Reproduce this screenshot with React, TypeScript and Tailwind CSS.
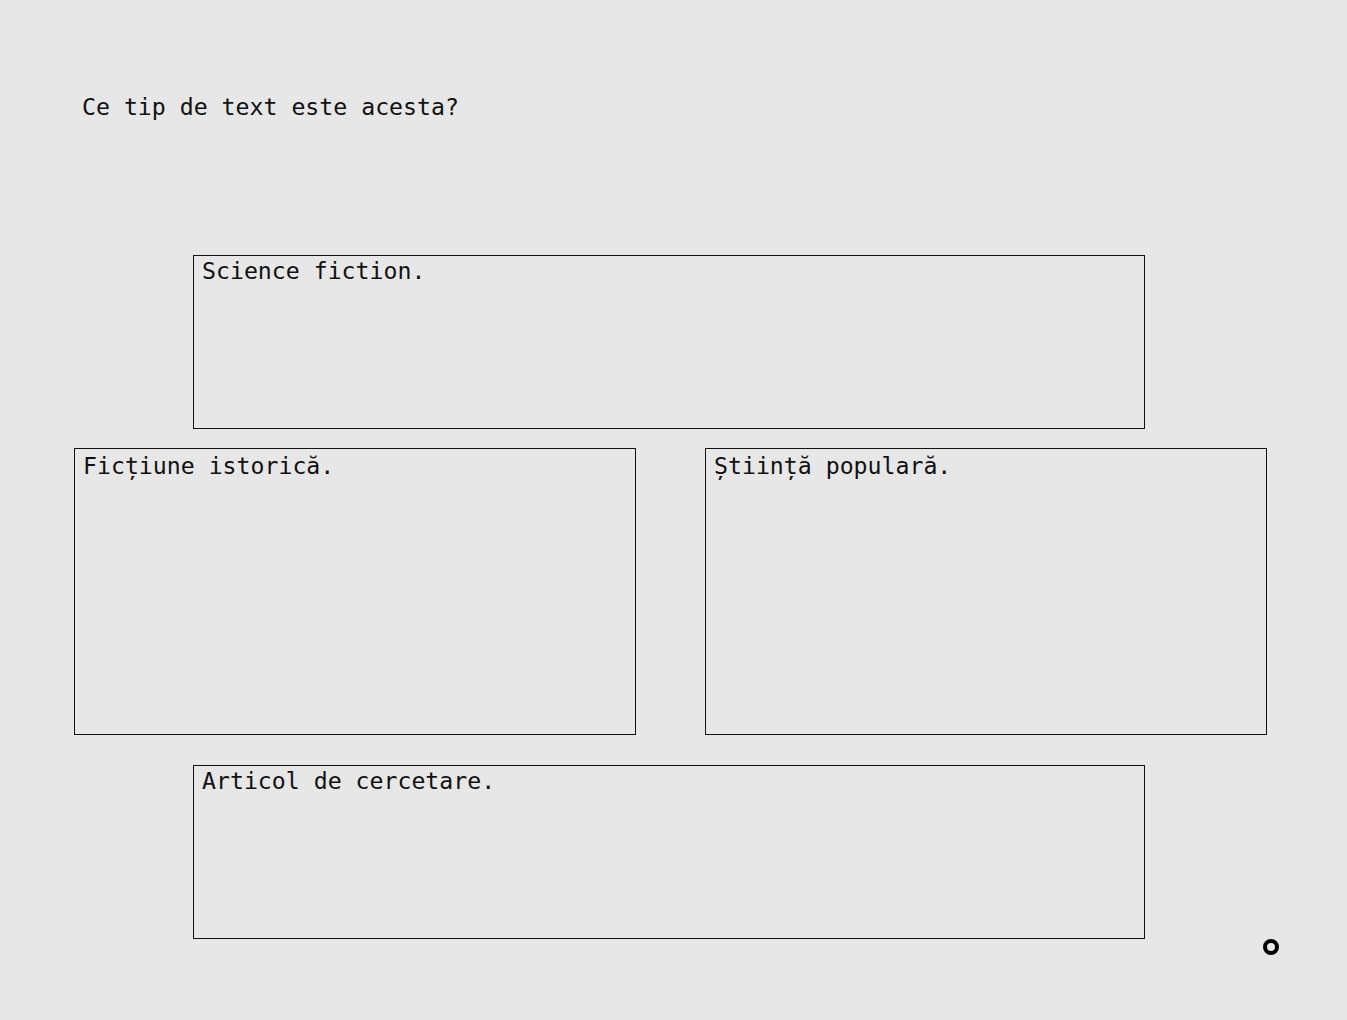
import React from 'react';

const mono = { fontFamily: '"DejaVu Sans Mono", "Liberation Mono", monospace' };

function Option({ label, className }: { label: string; className: string }) {
  return (
    <div className={`border border-[#111] pl-2 text-[23.2px] leading-[28px] text-[#111] ${className}`}>
      {label}
    </div>
  );
}

export default function App() {
  return (
    <div className="relative min-h-[1020px] w-full bg-[#e7e7e7]" style={mono}>
      <div className="pl-[82px] pt-[93px] text-[23.2px] leading-[28px] text-[#111]">
        Ce tip de text este acesta?
      </div>

      <div className="mt-[134px] flex flex-col">
        <Option label="Science fiction." className="ml-[193px] h-[174px] w-[952px] pt-[1px]" />

        <div className="mt-[19px] flex gap-[69px] pl-[74px]">
          <Option label="Ficțiune istorică." className="h-[287px] w-[562px] pt-[3px]" />
          <Option label="Știință populară." className="h-[287px] w-[562px] pt-[3px]" />
        </div>

        <Option label="Articol de cercetare." className="ml-[193px] mt-[30px] h-[174px] w-[952px] pt-[1px]" />
      </div>

      {/* small ring marker, bottom right */}
      <div className="absolute left-[1263px] top-[939px] h-4 w-4 rounded-full border-[4px] border-black" />
    </div>
  );
}
